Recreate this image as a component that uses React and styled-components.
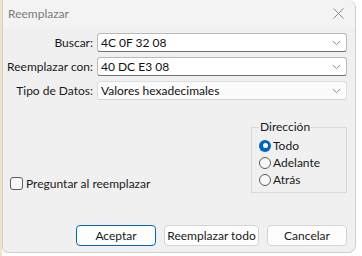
import React from "react";
import styled, { createGlobalStyle } from "styled-components";

const Global = createGlobalStyle`
  html, body { margin: 0; padding: 0; background: #ffffff; }
  body { font-family: Lato, "Noto Sans", sans-serif; font-size: 12px; color: #1a1a1a; }
  * { box-sizing: border-box; }
`;

const Page = styled.div`
  width: 362px;
  height: 256px;
  padding: 0 7px 3px 2px;
  background: linear-gradient(to right, #f3e2c8 0, #f3e2c8 2px, #ffffff 2px);
  display: flex;
`;

const Window = styled.div`
  flex: 1;
  display: flex;
  flex-direction: column;
  background: #f0f0f0;
  border: 1px solid #cfcfcf;
  border-top: none;
  border-radius: 0 8px 8px 6px;
`;

const TitleBar = styled.div`
  height: 28px;
  display: flex;
  align-items: center;
  justify-content: space-between;
  padding: 0 11px 1px 5px;
  background: #f3f3f3;
  border-top-right-radius: 8px;
`;

const Title = styled.span`
  color: #7b7b7b;
  font-size: 12px;
`;

const Content = styled.div`
  flex: 1;
  display: flex;
  flex-direction: column;
  padding: 5px 8px 6px 4px;
`;

const Form = styled.div`
  display: grid;
  grid-template-columns: 86px 250px;
  column-gap: 4px;
  row-gap: 5px;
  align-items: center;
`;

const Label = styled.label`
  text-align: right;
  white-space: nowrap;
  color: #1a1a1a;
`;

const Field = styled.div`
  height: 19px;
  display: flex;
  align-items: center;
  justify-content: space-between;
  padding: 0 5px 0 3px;
  border-radius: 3px;
  background: ${(p) => (p.$readonly ? "#fbfbfb" : "#ffffff")};
  border: 1px solid ${(p) => (p.$readonly ? "#dedede" : "#b9b9b9")};
  border-bottom-color: ${(p) => (p.$readonly ? "#d2d2d2" : "#6e6e6e")};
  color: #111;
`;

const Middle = styled.div`
  flex: 1;
  display: flex;
  justify-content: space-between;
  align-items: flex-end;
  padding: 0 0 0 3px;
`;

const CheckRow = styled.label`
  display: flex;
  align-items: center;
  gap: 3px;
  margin-bottom: 2px;
`;

const CheckBox = styled.span`
  width: 13px;
  height: 13px;
  border: 1px solid #5c5c5c;
  border-radius: 3px;
  background: #f7f7f7;
`;

const Group = styled.fieldset`
  margin: 0;
  width: 96px;
  padding: 4px 0 5px 7px;
  border: 1px solid #d8d8d8;
  border-radius: 0;
  display: flex;
  flex-direction: column;
  gap: 2px;
`;

const Legend = styled.legend`
  padding: 0 1px;
  margin-left: 0;
  line-height: 14px;
`;

const RadioRow = styled.label`
  display: flex;
  align-items: center;
  gap: 2px;
  height: 15px;
`;

const Radio = styled.span`
  width: 12px;
  height: 12px;
  border-radius: 50%;
  background: ${(p) => (p.$checked ? "#0067c0" : "#f7f7f7")};
  border: ${(p) => (p.$checked ? "none" : "1px solid #5c5c5c")};
  display: flex;
  align-items: center;
  justify-content: center;
  &::after {
    content: "";
    display: ${(p) => (p.$checked ? "block" : "none")};
    width: 5px;
    height: 5px;
    border-radius: 50%;
    background: #ffffff;
  }
`;

const Buttons = styled.div`
  display: flex;
  justify-content: flex-end;
  gap: 8px;
  margin-top: 32px;
`;

const Button = styled.button`
  font-family: inherit;
  font-size: 12px;
  color: #1a1a1a;
  height: 21px;
  width: ${(p) => p.$w}px;
  padding: 0;
  white-space: nowrap;
  background: #fdfdfd;
  border-radius: 4px;
  border: 1px solid ${(p) => (p.$default ? "#0067c0" : "#d3d3d3")};
  box-shadow: ${(p) => (p.$default ? "inset 0 0 0 1px #ffffff" : "none")};
`;

const Chevron = () => (
  <svg width="9" height="6" viewBox="0 0 9 6">
    <path d="M0.8 1 L4.5 4.6 L8.2 1" fill="none" stroke="#8a8a8a" strokeWidth="1" />
  </svg>
);

const CloseIcon = () => (
  <svg width="11" height="11" viewBox="0 0 11 11">
    <path d="M0.5 0.5 L10.5 10.5 M10.5 0.5 L0.5 10.5" stroke="#8c8c8c" strokeWidth="1" />
  </svg>
);

export default function App() {
  return (
    <>
      <Global />
      <Page>
        <Window>
          <TitleBar>
            <Title>Reemplazar</Title>
            <CloseIcon />
          </TitleBar>
          <Content>
            <Form>
              <Label>Buscar:</Label>
              <Field>
                <span>4C 0F 32 08</span>
                <Chevron />
              </Field>
              <Label>Reemplazar con:</Label>
              <Field>
                <span>40 DC E3 08</span>
                <Chevron />
              </Field>
              <Label>Tipo de Datos:</Label>
              <Field $readonly>
                <span>Valores hexadecimales</span>
                <Chevron />
              </Field>
            </Form>
            <Middle>
              <CheckRow>
                <CheckBox />
                <span>Preguntar al reemplazar</span>
              </CheckRow>
              <Group>
                <Legend>Dirección</Legend>
                <RadioRow>
                  <Radio $checked />
                  <span>Todo</span>
                </RadioRow>
                <RadioRow>
                  <Radio />
                  <span>Adelante</span>
                </RadioRow>
                <RadioRow>
                  <Radio />
                  <span>Atrás</span>
                </RadioRow>
              </Group>
            </Middle>
            <Buttons>
              <Button $default $w={80}>Aceptar</Button>
              <Button $w={95}>Reemplazar todo</Button>
              <Button $w={80}>Cancelar</Button>
            </Buttons>
          </Content>
        </Window>
      </Page>
    </>
  );
}
